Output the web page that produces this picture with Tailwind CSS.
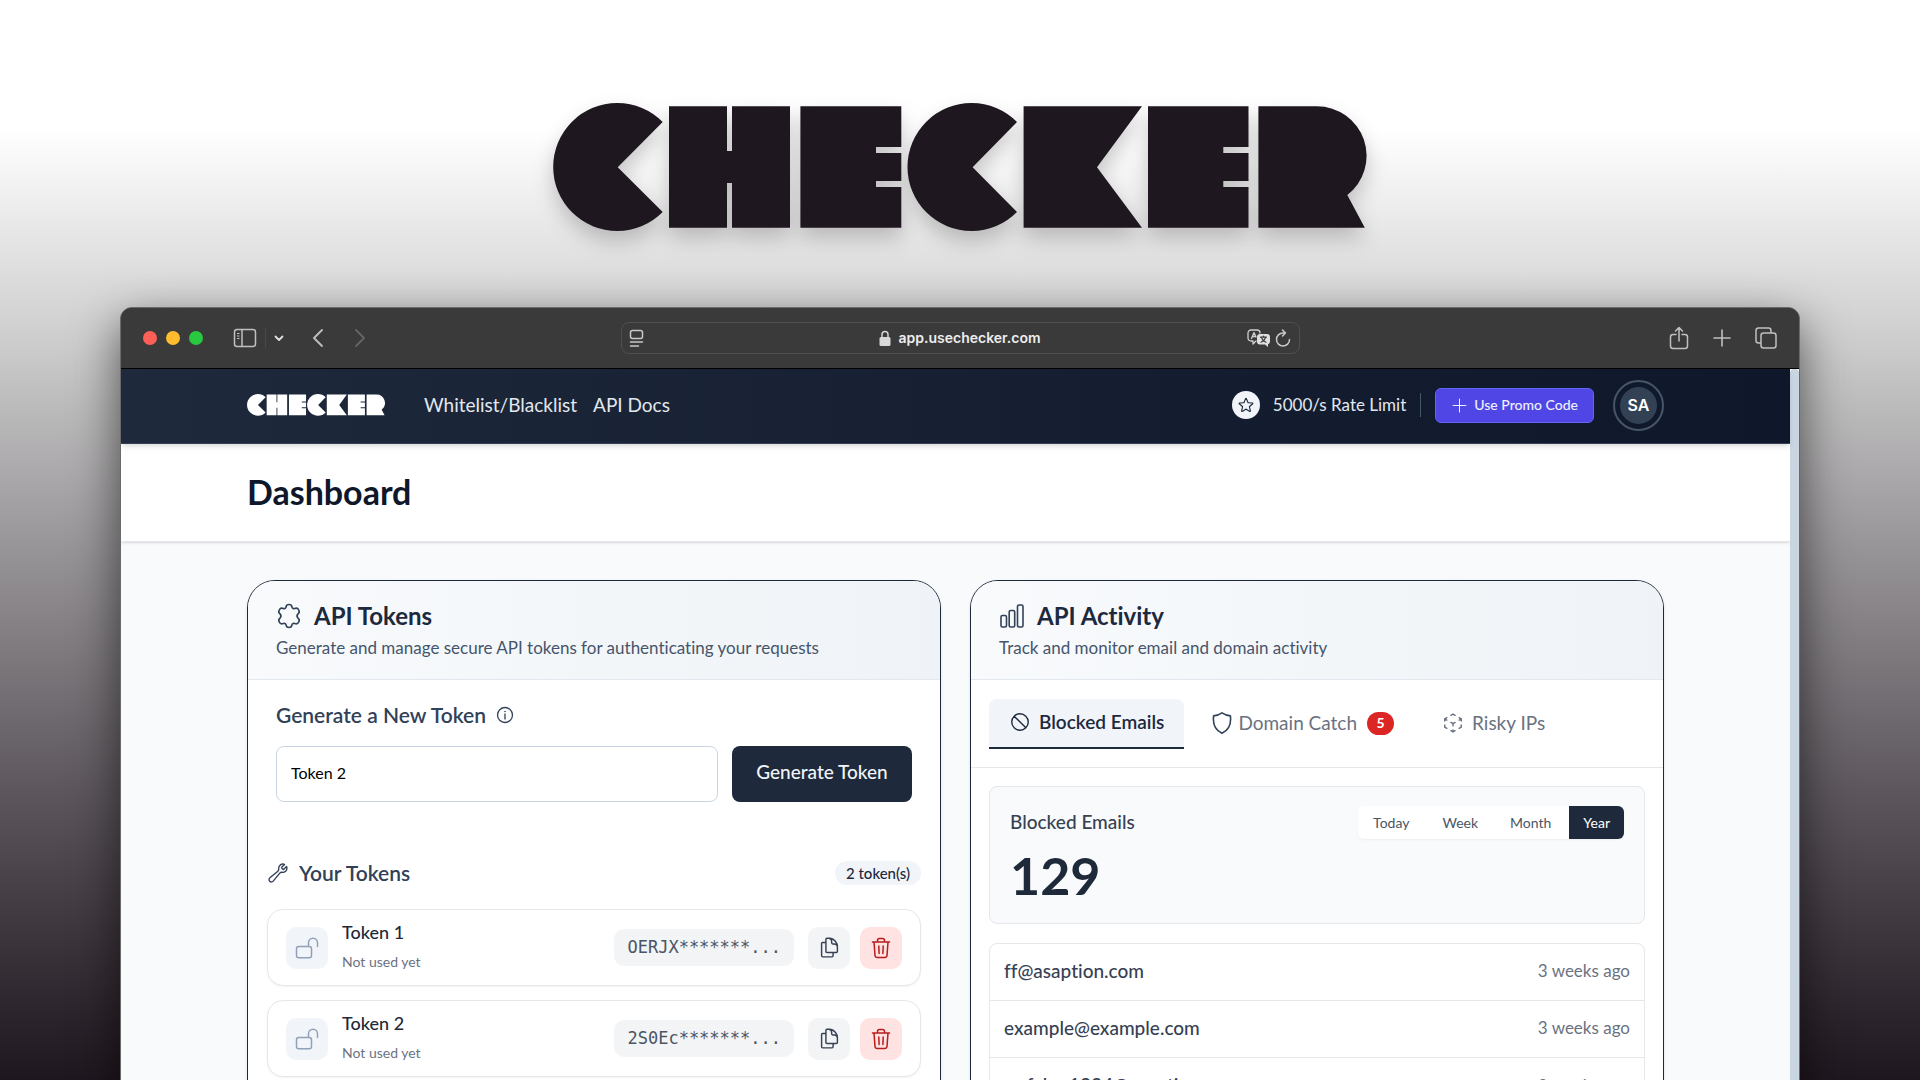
<!DOCTYPE html>
<html lang="en">
  <head>
    <meta charset="UTF-8" />
    <meta name="viewport" content="width=device-width, initial-scale=1.0" />
    <title>Checker - Dashboard</title>
    <script src="https://cdn.jsdelivr.net/npm/@tailwindcss/browser@4"></script>
  </head>
  <body
    class="h-screen overflow-hidden font-['Lato',sans-serif] [font-variant-ligatures:none] bg-linear-to-b from-white from-12% via-[#cccccc] via-32% to-[#1f171f]"
  >
    <!-- shared shapes -->
    <svg class="hidden" xmlns="http://www.w3.org/2000/svg">
      <symbol id="logo" viewBox="-1 0 814 129">
        <path d="M108.7 19A64 64 0 1 0 108.7 109L63.700 64.300Z" />
        <path d="M115 3.300h58v44.700h5V3.300h58v121.400h-58V80h-5v44.700h-58Z" />
        <path d="M246.400 3.300h100.900V44H322v6h25.300v28H322v6h25.300v40.700H246.400Z" />
        <path d="M463 19A64 64 0 1 0 463 109L418.600 64.300Z" />
        <path d="M469.600 3.300H588L543 64.300L588 124.700H469.600Z" />
        <path d="M594 3.300h100.500V44H669.300v6h25.200v28h-25.200v6h25.200v40.700H594Z" />
        <path d="M704.400 3.300H763A49.500 49.500 0 0 1 793.300 92L810.800 124.700H704.400Z" />
      </symbol>
      <symbol id="lock-open" viewBox="0 0 24 24">
        <path d="M13.500 10.500V6.750a4.500 4.500 0 119 0v3.750M3.750 21.750h10.500a2.250 2.250 0 002.250-2.250v-6.750a2.250 2.250 0 00-2.250-2.250H3.750a2.250 2.250 0 00-2.250 2.250v6.750a2.250 2.250 0 002.250 2.250z" />
      </symbol>
      <symbol id="copy" viewBox="0 0 24 24">
        <path d="M15.750 17.250v3.375c0 .621-.504 1.125-1.125 1.125h-9.750a1.125 1.125 0 01-1.125-1.125V7.875c0-.621.504-1.125 1.125-1.125H6.750a9.060 9.060 0 011.500.124m7.500 10.376h3.375c.621 0 1.125-.504 1.125-1.125V11.250c0-4.460-3.243-8.161-7.500-8.876a9.060 9.060 0 00-1.500-.124H9.375c-.621 0-1.125.504-1.125 1.125v3.500m7.500 10.375H9.375a1.125 1.125 0 01-1.125-1.125v-9.250m12 6.625v-1.875a3.375 3.375 0 00-3.375-3.375h-1.500a1.125 1.125 0 01-1.125-1.125v-1.500a3.375 3.375 0 00-3.375-3.375H9.750" />
      </symbol>
      <symbol id="trash" viewBox="0 0 24 24">
        <path d="M3.500 6h17M8.500 6V4.500A2 2 0 0110.500 2.500h3a2 2 0 012 2V6M5 6l1 13.500A2.300 2.300 0 008.300 21.500h7.400a2.300 2.300 0 002.300-2L19 6M9.800 10l.3 7.500M14.200 10l-.3 7.500" />
      </symbol>
    </svg>

    <div class="flex flex-col items-center">
      <svg class="mt-[103px] w-[814px] h-[129px] fill-[#1f171f] drop-shadow-[0_10px_10px_rgba(0,0,0,0.2)]" role="img" aria-label="Checker">
        <use href="#logo" />
      </svg>

      <!-- browser window -->
      <div
        class="mt-[75px] w-7/8 rounded-t-xl border border-[#6a6a6a] bg-[#3a3a3a] overflow-hidden shadow-[0_16px_48px_rgba(0,0,0,0.6)]"
      >
        <div class="h-[61px] grid grid-cols-[1fr_auto_1fr] items-center px-[22px] border-b border-black bg-[#3a3a3a] text-[#c0c0c0]">
          <div class="flex items-center">
            <div class="flex gap-[9px]">
              <span class="size-[14px] rounded-full bg-[#ff5f57]"></span>
              <span class="size-[14px] rounded-full bg-[#febc2e]"></span>
              <span class="size-[14px] rounded-full bg-[#28c840]"></span>
            </div>
            <button aria-label="Sidebar" class="ml-[30px] pr-2 border-r border-[#4a4a4a]">
              <svg class="w-6 h-5" viewBox="0 0 24 20" fill="none" stroke="currentColor" stroke-width="1.500">
                <rect x="1.500" y="1.500" width="21" height="17" rx="2.500" />
                <path d="M9 1.500v17" />
                <path d="M4 5.500h2.500M4 8h2.500M4 10.500h2.500" stroke-width="1.200" />
              </svg>
            </button>
            <button aria-label="Tab groups" class="ml-2">
              <svg class="size-[10px]" viewBox="0 0 10 10" fill="none" stroke="#e0e0e0" stroke-width="1.800" stroke-linecap="round" stroke-linejoin="round"><path d="M1.500 3.500L5 7l3.500-3.500" /></svg>
            </button>
            <button aria-label="Back" class="ml-7">
              <svg class="w-3 h-5" viewBox="0 0 12 20" fill="none" stroke="currentColor" stroke-width="1.800" stroke-linecap="round" stroke-linejoin="round"><path d="M10 2L2 10l8 8" /></svg>
            </button>
            <button aria-label="Forward" class="ml-[30px] text-[#646464]">
              <svg class="w-3 h-5" viewBox="0 0 12 20" fill="none" stroke="currentColor" stroke-width="1.800" stroke-linecap="round" stroke-linejoin="round"><path d="M2 2l8 8-8 8" /></svg>
            </button>
          </div>

          <div class="w-[679px] h-8 flex items-center justify-between px-[7px] rounded-lg border border-[#505050]">
            <svg class="w-4 h-5" viewBox="0 0 16 20" fill="none" stroke="#c8c8c8" stroke-width="1.500" stroke-linecap="round">
              <rect x="1.500" y="2.500" width="12" height="8" rx="2" />
              <path d="M1.500 14h12M1.500 18h8" />
            </svg>
            <div class="flex items-center gap-[7px] pl-7 font-['Inter'] text-sm font-semibold text-[#ededed]">
              <svg class="w-3 h-4" viewBox="0 0 12 16" fill="#d8d8d8">
                <rect x="0.500" y="7" width="11" height="9" rx="1.500" />
                <path d="M3 7.500V4.500a3 3 0 016 0v3" fill="none" stroke="#d8d8d8" stroke-width="1.500" />
              </svg>
              <span>app.usechecker.com</span>
            </div>
            <div class="flex items-center gap-1">
              <svg class="w-6 h-5" viewBox="0 0 24 20" fill="none" stroke="#d0d0d0" stroke-width="1.300" stroke-linecap="round" stroke-linejoin="round">
                <path d="M9 13l-3 3v-3H4a3 3 0 01-3-3V5a3 3 0 013-3h6a3 3 0 013 3" />
                <path d="M4.500 10.500L7 4.500l2 4.500M5.500 8.500h3" />
                <path d="M13 6h7a3 3 0 013 3v4.500a3 3 0 01-2 2.800V19l-3-2.500h-5a3 3 0 01-3-3V9a3 3 0 013-3z" fill="#e0e0e0" stroke="none" />
                <path d="M13.500 9.200h6M16.500 8v1.200M18.500 9.200c-.5 2.500-2.500 4.300-4.500 5M14.500 9.200c.5 2.500 2.500 4.300 4.500 5" stroke="#3a3a3a" stroke-width="1.200" />
              </svg>
              <svg class="w-4 h-5" viewBox="0 0 16 20" fill="none" stroke="#c8c8c8" stroke-width="1.500" stroke-linecap="round" stroke-linejoin="round">
                <path d="M14.500 11.500A6.500 6.500 0 118 5h2.500M7.500 2l3 3-3 3" />
              </svg>
            </div>
          </div>

          <div class="flex items-center justify-end gap-6">
            <button aria-label="Share">
              <svg class="w-5 h-6" viewBox="0 0 20 24" fill="none" stroke="currentColor" stroke-width="1.500" stroke-linecap="round" stroke-linejoin="round">
                <path d="M7 8.500H4A2.500 2.500 0 001.500 11v9A2.500 2.500 0 004 22.500h12a2.500 2.500 0 002.500-2.500v-9A2.500 2.500 0 0016 8.500h-3M10 15V1.500M6.500 5L10 1.500 13.500 5" />
              </svg>
            </button>
            <button aria-label="New tab">
              <svg class="w-[18px] h-6" viewBox="0 0 18 24" fill="none" stroke="currentColor" stroke-width="1.600" stroke-linecap="round"><path d="M9 4v16M1 12h16" /></svg>
            </button>
            <button aria-label="Show tabs">
              <svg class="w-[22px] h-6" viewBox="1 0 22 24" fill="none" stroke="currentColor" stroke-width="1.500">
                <rect x="7" y="7" width="15" height="15" rx="2.500" />
                <path d="M7 17H4.500A2.500 2.500 0 012 14.500V4.500A2.500 2.500 0 014.500 2h10A2.500 2.500 0 0117 4.500V7" />
              </svg>
            </button>
          </div>
        </div>

        <div class="flex bg-[#f9fafc]">
          <div class="flex-1">
            <nav class="relative h-[75px] px-8 bg-linear-to-r from-[#1e293b] to-[#0f172a] border-b border-[#334155] shadow-md">
              <div class="max-w-[1417px] h-full mx-auto pb-[2px] flex items-center justify-between text-slate-200">
                <div class="flex items-center text-[19px]">
                  <a href="#" aria-label="Checker home" class="mr-[39px]"><svg class="w-[138px] h-[22px] fill-white"><use href="#logo" /></svg></a>
                  <a href="#" class="mr-4">Whitelist/Blacklist</a>
                  <a href="#">API Docs</a>
                </div>
                <div class="flex items-center">
                  <span class="size-7 rounded-full bg-slate-100 text-slate-800 flex items-center justify-center">
                    <svg class="size-[18px]" fill="none" viewBox="0 0 24 24" stroke-width="1.500" stroke="currentColor">
                      <path stroke-linecap="round" stroke-linejoin="round" d="M11.480 3.499a.562.562 0 011.040 0l2.125 5.111a.563.563 0 00.475.345l5.518.442c.499.040.701.663.321.988l-4.204 3.602a.563.563 0 00-.182.557l1.285 5.385a.562.562 0 01-.840.610l-4.725-2.885a.563.563 0 00-.586 0L6.982 20.540a.562.562 0 01-.840-.610l1.285-5.386a.562.562 0 00-.182-.557l-4.204-3.602a.563.563 0 01.321-.988l5.518-.442a.563.563 0 00.475-.345L11.480 3.500z" />
                    </svg>
                  </span>
                  <span class="ml-[13px] text-[17px]">5000/s Rate Limit</span>
                  <span class="mx-[14px] w-px h-6 bg-slate-600"></span>
                  <button class="h-[35px] px-[15px] flex items-center gap-[6px] rounded-md border border-[#6366f1] bg-[#4f46e5] text-sm font-medium text-indigo-50">
                    <svg class="size-[17px]" fill="none" viewBox="0 0 24 24" stroke-width="1.500" stroke="currentColor"><path stroke-linecap="round" d="M12 3v18M3 12h18" /></svg>
                    <span>Use Promo Code</span>
                  </button>
                  <button class="ml-[19px] size-[51px] p-[5px] rounded-full border-2 border-[#475569]">
                    <span class="size-full rounded-full bg-[#334155] flex items-center justify-center font-['Inter'] text-base font-semibold text-white">SA</span>
                  </button>
                </div>
              </div>
            </nav>

            <header class="h-[98px] px-8 bg-white border-b border-gray-200 shadow-sm">
              <div class="max-w-[1417px] h-full mx-auto pb-[2px] flex items-center">
                <h1 class="text-[34px] font-bold text-slate-900">Dashboard</h1>
              </div>
            </header>

            <main class="px-8 py-[38px]">
              <div class="max-w-[1417px] mx-auto grid grid-cols-2 gap-[29px]">
                <!-- tokens -->
                <section class="rounded-[28px] border border-slate-800 bg-white overflow-hidden shadow-sm">
                  <div class="h-[99px] px-7 pt-[19px] bg-linear-to-r from-[#f8fafc] to-[#eff3f7] border-b border-slate-200">
                    <h2 class="flex items-center gap-3 text-[24px] leading-8 font-bold text-slate-800">
                      <svg class="size-[26px] text-slate-700" viewBox="-12 -12 24 24" fill="none" stroke="currentColor" stroke-width="1.500" stroke-linejoin="round">
                        <path d="M0-10.600Q2.500-10.600 2.600-8.600Q3-6.300 5.300-7Q7.900-8 9-5.500Q10.200-3.300 8.300-2Q6.500 0 8.300 2Q10.200 3.300 9 5.500Q7.900 8 5.300 7Q3 6.300 2.600 8.600Q2.500 10.600 0 10.600Q-2.500 10.600-2.600 8.600Q-3 6.300-5.300 7Q-7.900 8-9 5.500Q-10.200 3.300-8.300 2Q-6.500 0-8.300-2Q-10.200-3.300-9-5.500Q-7.900-8-5.300-7Q-3-6.300-2.600-8.600Q-2.500-10.600 0-10.600Z" />
                      </svg>
                      API Tokens
                    </h2>
                    <p class="text-[17px] leading-8 text-slate-600">Generate and manage secure API tokens for authenticating your requests</p>
                  </div>

                  <form class="px-7 pt-[19px]">
                    <label for="token" class="flex items-center gap-[10px] text-[21px] leading-8 font-semibold text-slate-700">
                      Generate a New Token
                      <svg class="size-[18px]" viewBox="0 0 18 18" fill="none" stroke="currentColor" stroke-width="1.300">
                        <circle cx="9" cy="9" r="7.500" />
                        <path d="M9 8v5" stroke-linecap="round" />
                        <circle cx="9" cy="5.500" r="0.800" fill="currentColor" stroke="none" />
                      </svg>
                    </label>
                    <div class="mt-[15px] flex gap-[14px]">
                      <input id="token" type="text" value="Token 2" class="flex-1 h-14 px-[14px] pb-1 rounded-lg border border-slate-300 text-base text-black" />
                      <button type="button" class="h-14 w-[180px] pb-1 rounded-lg bg-[#1e293b] text-[19px] font-medium text-slate-100">Generate Token</button>
                    </div>
                  </form>

                  <div class="px-[19px] pt-[55px]">
                    <div class="flex items-center justify-between">
                      <h3 class="flex items-center gap-[10px] text-[21px] leading-8 font-semibold text-slate-700">
                        <svg class="size-[22px]" fill="none" viewBox="0 0 24 24" stroke-width="1.500" stroke="currentColor">
                          <path stroke-linecap="round" stroke-linejoin="round" d="M21.750 6.750a4.500 4.500 0 01-4.884 4.484c-1.076-.091-2.264.071-2.950.904l-7.152 8.684a2.548 2.548 0 11-3.586-3.586l8.684-7.152c.833-.686.995-1.874.904-2.950a4.500 4.500 0 016.336-4.486l-3.276 3.276a3.004 3.004 0 002.250 2.250l3.276-3.276c.256.565.398 1.192.398 1.852z" />
                        </svg>
                        Your Tokens
                      </h3>
                      <span class="h-6 px-[11px] flex items-center rounded-full bg-slate-100 text-[15px] font-medium text-slate-800">2 token(s)</span>
                    </div>

                    <ul class="mt-5 flex flex-col gap-[14px]">
                      <li class="h-[77px] px-[18px] flex items-center rounded-2xl border border-gray-200 bg-white shadow-xs">
                        <span class="size-[42px] rounded-[10px] bg-slate-100 text-slate-400 flex items-center justify-center">
                          <svg class="size-6" fill="none" stroke-width="1.500" stroke="currentColor" stroke-linecap="round" stroke-linejoin="round"><use href="#lock-open" /></svg>
                        </span>
                        <div class="ml-[14px] pb-1 flex-1">
                          <p class="text-lg leading-8 font-medium text-gray-800">Token 1</p>
                          <p class="text-sm leading-7 text-gray-500">Not used yet</p>
                        </div>
                        <code class="h-[37px] px-[13px] flex items-center rounded-[10px] bg-gray-100 font-['DejaVu_Sans_Mono',monospace] text-[17px] text-gray-600">OERJX*******...</code>
                        <button aria-label="Copy Token 1" class="ml-[14px] size-[42px] rounded-[10px] bg-gray-100 text-gray-700 flex items-center justify-center">
                          <svg class="size-[23px]" fill="none" stroke-width="1.500" stroke="currentColor" stroke-linecap="round" stroke-linejoin="round"><use href="#copy" /></svg>
                        </button>
                        <button aria-label="Delete Token 1" class="ml-[10px] size-[42px] rounded-[10px] bg-red-100 text-[#b91c1c] flex items-center justify-center">
                          <svg class="size-6" fill="none" stroke-width="1.500" stroke="currentColor" stroke-linecap="round" stroke-linejoin="round"><use href="#trash" /></svg>
                        </button>
                      </li>
                      <li class="h-[77px] px-[18px] flex items-center rounded-2xl border border-gray-200 bg-white shadow-xs">
                        <span class="size-[42px] rounded-[10px] bg-slate-100 text-slate-400 flex items-center justify-center">
                          <svg class="size-6" fill="none" stroke-width="1.500" stroke="currentColor" stroke-linecap="round" stroke-linejoin="round"><use href="#lock-open" /></svg>
                        </span>
                        <div class="ml-[14px] pb-1 flex-1">
                          <p class="text-lg leading-8 font-medium text-gray-800">Token 2</p>
                          <p class="text-sm leading-7 text-gray-500">Not used yet</p>
                        </div>
                        <code class="h-[37px] px-[13px] flex items-center rounded-[10px] bg-gray-100 font-['DejaVu_Sans_Mono',monospace] text-[17px] text-gray-600">2S0Ec*******...</code>
                        <button aria-label="Copy Token 2" class="ml-[14px] size-[42px] rounded-[10px] bg-gray-100 text-gray-700 flex items-center justify-center">
                          <svg class="size-[23px]" fill="none" stroke-width="1.500" stroke="currentColor" stroke-linecap="round" stroke-linejoin="round"><use href="#copy" /></svg>
                        </button>
                        <button aria-label="Delete Token 2" class="ml-[10px] size-[42px] rounded-[10px] bg-red-100 text-[#b91c1c] flex items-center justify-center">
                          <svg class="size-6" fill="none" stroke-width="1.500" stroke="currentColor" stroke-linecap="round" stroke-linejoin="round"><use href="#trash" /></svg>
                        </button>
                      </li>
                    </ul>
                  </div>
                </section>

                <!-- activity -->
                <section class="rounded-[28px] border border-slate-800 bg-white overflow-hidden shadow-sm">
                  <div class="h-[99px] px-7 pt-[19px] bg-linear-to-r from-[#f8fafc] to-[#eff3f7] border-b border-slate-200">
                    <h2 class="flex items-center gap-3 text-[24px] leading-8 font-bold text-slate-800">
                      <svg class="size-[26px] text-slate-700" viewBox="0 0 26 26" fill="none" stroke="currentColor" stroke-width="1.600">
                        <rect x="2" y="12.500" width="5.500" height="11.500" rx="1.500" />
                        <rect x="10.200" y="7.500" width="5.500" height="16.500" rx="1.500" />
                        <rect x="18.500" y="2" width="5.500" height="22" rx="1.500" />
                      </svg>
                      API Activity
                    </h2>
                    <p class="text-[17px] leading-8 text-slate-600">Track and monitor email and domain activity</p>
                  </div>

                  <div role="tablist" class="h-[88px] px-[18px] pt-[19px] flex items-start gap-2 border-b border-gray-200 text-[19px] text-gray-500">
                    <button role="tab" aria-selected="true" class="h-[50px] px-5 pb-[2px] flex items-center gap-2 rounded-t-lg border-b-2 border-slate-800 bg-slate-100 font-semibold text-slate-800">
                      <svg class="size-[22px]" fill="none" viewBox="0 0 24 24" stroke-width="1.500" stroke="currentColor"><path stroke-linecap="round" stroke-linejoin="round" d="M18.364 18.364A9 9 0 005.636 5.636m12.728 12.728A9 9 0 015.636 5.636m12.728 12.728L5.636 5.636" /></svg>
                      Blocked Emails
                    </button>
                    <button role="tab" class="h-[50px] px-5 pb-[2px] flex items-center gap-[6px]">
                      <svg class="w-5 h-6 text-slate-700" fill="none" viewBox="0 0 20 24" stroke-width="1.600" stroke="currentColor" stroke-linejoin="round"><path d="M10 1.800C7.500 3.500 4.500 4.600 1.600 4.900c-.8 6.600.4 13.800 8.400 17.300 8-3.500 9.200-10.700 8.400-17.300C15.500 4.600 12.500 3.500 10 1.800z" /></svg>
                      Domain Catch
                      <span class="ml-1 w-[27px] h-[23px] flex items-center justify-center rounded-full bg-[#dc2626] text-sm font-bold text-white">5</span>
                    </button>
                    <button role="tab" class="h-[50px] px-5 pb-[2px] flex items-center gap-2">
                      <svg class="size-[22px]" fill="none" viewBox="0 0 24 24" stroke-width="1.600" stroke="currentColor"><path stroke-linecap="round" stroke-linejoin="round" d="M21 7.500l-2.250-1.313M21 7.500v2.250m0-2.250l-2.250 1.313M3 7.500l2.250-1.313M3 7.500l2.250 1.313M3 7.500v2.250m9 3l2.250-1.313M12 12.750l-2.250-1.313M12 12.750V15m0 6.750l2.250-1.313M12 21.750V19.500m0 2.250l-2.250-1.313m0-16.875L12 2.250l2.250 1.313M21 14.250v2.250l-2.250 1.313m-13.500 0L3 16.500v-2.250" /></svg>
                      Risky IPs
                    </button>
                  </div>

                  <div class="p-[18px]">
                    <div class="h-[138px] px-5 pt-[19px] rounded-lg border border-gray-200 bg-gray-50">
                      <div class="flex items-center justify-between">
                        <h3 class="text-[19px] font-medium text-gray-700">Blocked Emails</h3>
                        <div class="h-[33px] flex rounded-md bg-white overflow-hidden shadow-xs text-sm text-gray-600">
                          <button class="px-[15px]">Today</button>
                          <button class="px-[18px]">Week</button>
                          <button class="px-[14px] mr-1">Month</button>
                          <button class="px-[14px] bg-[#1e293b] text-white">Year</button>
                        </div>
                      </div>
                      <p class="mt-2 text-[52px] leading-14 font-bold text-gray-800">129</p>
                    </div>

                    <ul class="mt-[19px] rounded-lg border border-gray-200 divide-y divide-gray-200 text-[19px] font-medium text-gray-700">
                      <li class="h-[57px] px-[14px] pb-[2px] flex items-center justify-between">
                        <span>ff@asaption.com</span>
                        <span class="text-[17px] font-normal text-gray-500">3 weeks ago</span>
                      </li>
                      <li class="h-[57px] px-[14px] pb-[2px] flex items-center justify-between">
                        <span>example@example.com</span>
                        <span class="text-[17px] font-normal text-gray-500">3 weeks ago</span>
                      </li>
                      <li class="h-[57px] px-[14px] pb-[2px] flex items-center justify-between">
                        <span>mrfaker1234@asaption.com</span>
                        <span class="text-[17px] font-normal text-gray-500">3 weeks ago</span>
                      </li>
                    </ul>
                  </div>
                </section>
              </div>
            </main>
          </div>

          <!-- scrollbar -->
          <div class="w-[9px] rounded-t bg-slate-300"></div>
        </div>
      </div>
    </div>
  </body>
</html>
